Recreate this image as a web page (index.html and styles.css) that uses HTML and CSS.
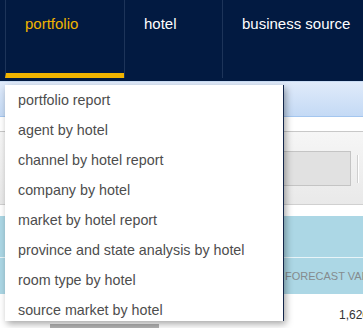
FILE: index.html
```html
<!DOCTYPE html>
<html lang="en">
  <head>
    <meta charset="UTF-8" />
    <meta name="viewport" content="width=device-width, initial-scale=1.0" />
    <title>Reports</title>
    <link rel="stylesheet" href="styles.css">
  </head>
  <body>
    <div class="page">
      <div class="topnav">
        <div class="nav-item active">portfolio</div>
        <div class="nav-item hotel">hotel</div>
        <div class="nav-item last">business source</div>
      </div>
      <div class="subbar"></div>
      <div class="spacer"></div>
      <div class="filters">
        <div class="filter-box"></div>
        <div class="filter-sep"></div>
      </div>
      <div class="gap"></div>
      <div class="table-head">
        <div class="head-top"></div>
        <div class="head-row">
          <span class="head-cell">FORECAST VARIANCE</span>
        </div>
      </div>
      <div class="table-row">
        <span class="cell-num">1,620</span>
      </div>
      <div class="pager">
        <div class="pager-btn"></div>
      </div>

      <!-- 열린 메뉴 -->
      <div class="dropdown-menu">
        <div>portfolio report</div>
        <div>agent by hotel</div>
        <div>channel by hotel report</div>
        <div>company by hotel</div>
        <div>market by hotel report</div>
        <div>province and state analysis by hotel</div>
        <div>room type by hotel</div>
        <div>source market by hotel</div>
      </div>
    </div>
  </body>
</html>
```

FILE: styles.css
```css
body {
  margin: 0;
  font-family: "Liberation Sans", Arial, sans-serif;
  background: #fff;
}

.page {
  position: relative;
  width: 363px;
  height: 328px;
  overflow: hidden;
}

.topnav {
  display: flex;
  height: 81px;
  padding-left: 5px;
  background: #021a41;
  box-sizing: border-box;
}

.nav-item {
  height: 78px;
  padding: 14px 0 0 19px;
  border-left: 1px solid #1d3459;
  box-sizing: border-box;
  font-size: 15px;
  line-height: 20px;
  color: #fff;
  white-space: nowrap;
}

.nav-item.active {
  width: 119px;
  color: #f0b400;
  border-bottom: 5px solid #f0b400;
}

.nav-item.hotel {
  width: 98px;
}

.nav-item.last {
  flex: 1;
}

.subbar {
  height: 36px;
  border-top: 1px solid #cadcf3;
  background: linear-gradient(#e0ebfa, #c4daf5);
  border-bottom: 1px solid #a4c6ef;
  box-sizing: border-box;
}

.spacer {
  height: 15px;
  border-bottom: 1px solid #c8c8c8;
  box-sizing: border-box;
}

.filters {
  display: flex;
  align-items: flex-start;
  height: 73px;
  padding: 19px 4px 0 20px;
  background: linear-gradient(#f6f6f6, #e9e9e9);
  border-bottom: 1px solid #d0d0d0;
  box-sizing: border-box;
}

.filter-box {
  flex: 1;
  height: 35px;
  background: #e1e1e1;
  border: 1px solid #c4c4c4;
  box-sizing: border-box;
}

.filter-sep {
  width: 1px;
  height: 28px;
  margin: 4px 0 0 6px;
  background: #cfcfcf;
  border-right: 1px solid #fff;
}

.gap {
  height: 11px;
}

.table-head {
  background: #acd7e5;
}

.head-top {
  height: 41px;
  border-bottom: 1px solid #e8f4f8;
}

.head-row {
  height: 36px;
  padding-left: 285px;
  font-size: 11px;
  line-height: 36px;
  color: #858b8e;
  white-space: nowrap;
}

.table-row {
  height: 30px;
  padding: 14px 0 0 339px;
  box-sizing: border-box;
  font-size: 12px;
  line-height: 14px;
  color: #333;
  white-space: nowrap;
}

.pager {
  padding: 0 0 0 50px;
}

.pager-btn {
  width: 109px;
  height: 10px;
  background: #b4b4b4;
}

.dropdown-menu {
  position: absolute;
  top: 85px;
  left: 5px;
  width: 278px;
  height: 236px;
  overflow: hidden;
  background: #fff;
  border-right: 1px solid #13264a;
  box-shadow: 2px 3px 7px rgba(0, 0, 0, 0.35);
}

.dropdown-menu div {
  height: 30px;
  padding-left: 13px;
  font-size: 14.3px;
  line-height: 30px;
  color: #4d4d4d;
  white-space: nowrap;
}
```
